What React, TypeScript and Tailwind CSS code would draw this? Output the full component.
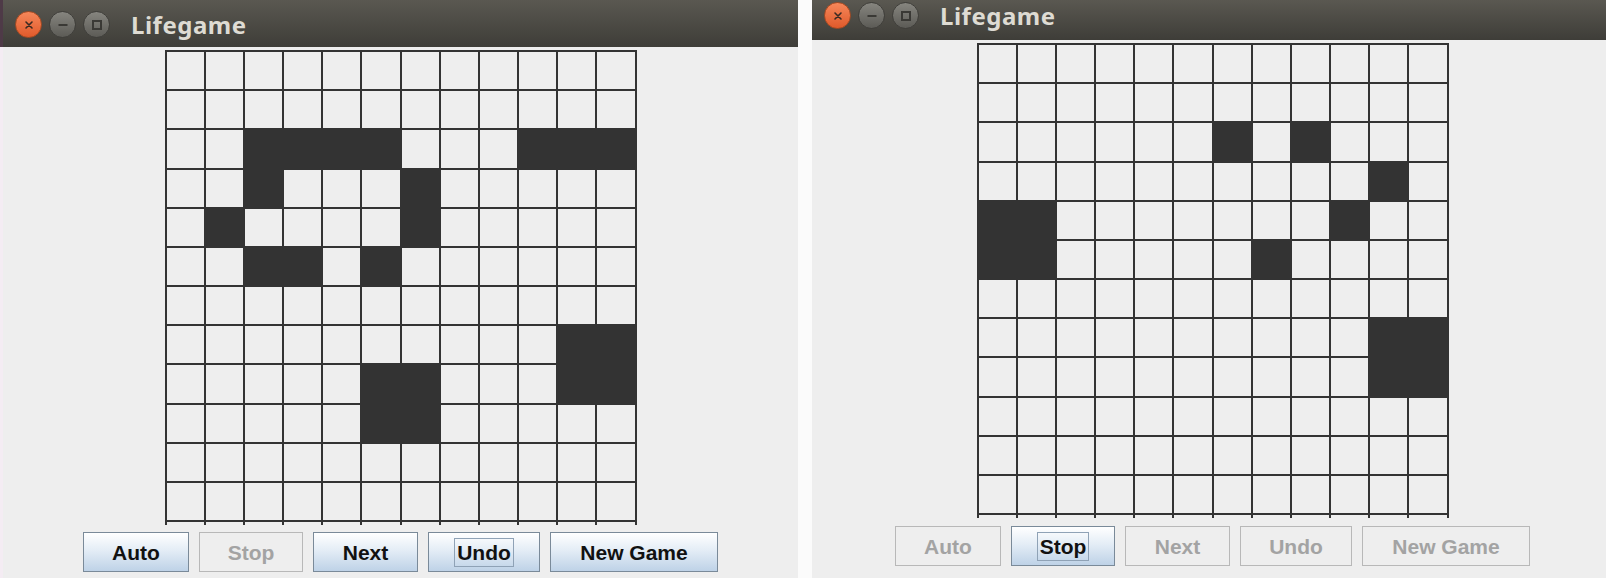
import React from "react";

type Board = number[][];

// live cells as [row, col]
const leftCells: Board = [
  [2, 2], [2, 3], [2, 4], [2, 5], [2, 9], [2, 10], [2, 11],
  [3, 2], [3, 6],
  [4, 1], [4, 6],
  [5, 2], [5, 3], [5, 5],
  [7, 10], [7, 11],
  [8, 5], [8, 6], [8, 10], [8, 11],
  [9, 5], [9, 6],
];

const rightCells: Board = [
  [2, 6], [2, 8],
  [3, 10],
  [4, 0], [4, 1], [4, 9],
  [5, 0], [5, 1], [5, 7],
  [7, 10], [7, 11],
  [8, 10], [8, 11],
];

const SIZE = 12;

function LifeGrid({ cells }: { cells: Board }) {
  const alive = new Set(cells.map(([r, c]) => r * SIZE + c));
  return (
    <div>
      <div className="grid h-[472px] w-[472px] grid-cols-12 grid-rows-12 gap-[2px] bg-[#333333] p-[2px]">
        {Array.from({ length: SIZE * SIZE }, (_, i) => (
          <div key={i} className={alive.has(i) ? "bg-[#333333]" : "bg-[#eeeeee]"} />
        ))}
      </div>
      {/* little tick marks under the bottom line */}
      <div className="grid h-[3px] w-[472px] grid-cols-12 gap-x-[2px] bg-[#333333] px-[2px]">
        {Array.from({ length: SIZE }, (_, i) => (
          <div key={i} className="bg-[#eeeeee]" />
        ))}
      </div>
    </div>
  );
}

interface SwingButtonProps {
  label: string;
  width: string;
  enabled: boolean;
  focused?: boolean;
}

function SwingButton({ label, width, enabled, focused }: SwingButtonProps) {
  return (
    <button
      type="button"
      className={[
        "flex h-[40px] items-center justify-center border font-['Liberation_Sans',Arial,sans-serif] text-[21px] font-bold leading-none",
        width,
        enabled
          ? "border-[#7a8a99] bg-[linear-gradient(to_bottom,#ffffff,#e4edf6_45%,#bed2e7)] text-[#111111]"
          : "border-[#b8b8b8] bg-[#eeeeee] text-[#a3a3a3]",
      ].join(" ")}
    >
      {focused ? (
        <span className="border border-[#8fa2b6] px-[2px] py-[3px]">{label}</span>
      ) : (
        label
      )}
    </button>
  );
}

function WindowControls() {
  return (
    <div className="flex items-center gap-[7px]">
      <div className="flex h-[27px] w-[27px] items-center justify-center rounded-full border border-[#a84a22] bg-[linear-gradient(to_bottom,#f6875a,#e05a2b)]">
        <svg width="10" height="10" viewBox="0 0 10 10">
          <path d="M2 2 L8 8 M8 2 L2 8" stroke="#3b2a22" strokeWidth="1.6" strokeLinecap="round" />
        </svg>
      </div>
      <div className="flex h-[27px] w-[27px] items-center justify-center rounded-full border border-[#3f3e3a] bg-[linear-gradient(to_bottom,#86857f,#5c5b56)]">
        <svg width="12" height="12" viewBox="0 0 12 12">
          <path d="M1.5 6 H10.5" stroke="#3a3935" strokeWidth="2" />
        </svg>
      </div>
      <div className="flex h-[27px] w-[27px] items-center justify-center rounded-full border border-[#3f3e3a] bg-[linear-gradient(to_bottom,#86857f,#5c5b56)]">
        <svg width="12" height="12" viewBox="0 0 12 12">
          <rect x="2" y="2" width="8" height="8" fill="none" stroke="#3a3935" strokeWidth="2" />
        </svg>
      </div>
    </div>
  );
}

interface LifeWindowProps {
  width: string;
  titleHeight: string;
  controlsTop: string;
  gridTop: string;
  buttonsTop: string;
  cells: Board;
  running: boolean;
}

function LifeWindow({ width, titleHeight, controlsTop, gridTop, buttonsTop, cells, running }: LifeWindowProps) {
  return (
    <div className={`flex h-full shrink-0 flex-col bg-[#eeeeee] ${width}`}>
      <div className={`flex shrink-0 items-start bg-[linear-gradient(to_bottom,#5a5851,#3e3d38)] pl-[12px] ${titleHeight} ${controlsTop}`}>
        <div className="flex items-center">
          <WindowControls />
          <span className="ml-[21px] font-['Noto_Sans',sans-serif] text-[24px] font-bold leading-none tracking-[0.5px] text-[#dedbd3]">
            Lifegame
          </span>
        </div>
      </div>
      <div className={`flex flex-col items-center ${gridTop}`}>
        <LifeGrid cells={cells} />
        <div className={`flex gap-[10px] ${buttonsTop}`}>
          <SwingButton label="Auto" width="w-[106px]" enabled={!running} />
          <SwingButton label="Stop" width="w-[104px]" enabled={running} focused={running} />
          <SwingButton label="Next" width="w-[105px]" enabled={!running} />
          <SwingButton label="Undo" width="w-[112px]" enabled={!running} focused={!running} />
          <SwingButton label="New Game" width="w-[168px]" enabled={!running} />
        </div>
      </div>
    </div>
  );
}

export default function App() {
  return (
    <div className="flex h-[578px] w-[1606px] overflow-hidden bg-white">
      <div className="flex w-[3px] shrink-0 flex-col">
        <div className="h-[47px] bg-[#4e3a47]" />
        <div className="flex-1 bg-[#f4ecf3]" />
      </div>
      <LifeWindow
        width="w-[795px]"
        titleHeight="h-[47px]"
        controlsTop="pt-[11px]"
        gridTop="pt-[3px]"
        buttonsTop="mt-[7px]"
        cells={leftCells}
        running={false}
      />
      <div className="w-[14px] shrink-0 bg-[#fbfbfb]" />
      <LifeWindow
        width="w-[801px]"
        titleHeight="h-[40px]"
        controlsTop="pt-[2px]"
        gridTop="pt-[3px]"
        buttonsTop="mt-[8px]"
        cells={rightCells}
        running={true}
      />
    </div>
  );
}
